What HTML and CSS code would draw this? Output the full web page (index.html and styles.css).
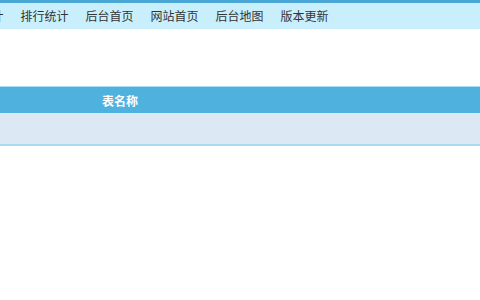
FILE: index.html
```html
<!DOCTYPE html>
<html lang="zh-CN">
<head>
    <meta charset="UTF-8">
    <title>后台管理</title>
    <link rel="stylesheet" href="styles.css">
</head>
<body>

    <div class="topbar">
        <ul class="nav">
            <li class="cut">数据统计</li>
            <li>排行统计</li>
            <li>后台首页</li>
            <li>网站首页</li>
            <li>后台地图</li>
            <li>版本更新</li>
        </ul>
    </div>

    <table class="list">
        <thead>
            <tr>
                <th class="name">表名称</th>
                <th></th>
            </tr>
        </thead>
        <tbody>
            <tr>
                <td></td>
                <td></td>
            </tr>
        </tbody>
    </table>

</body>
</html>
```

FILE: styles.css
```css
body {
    margin: 0;
    font-family: "Noto Sans CJK SC", "Liberation Sans", sans-serif;
    font-size: 12px;
    color: #333;
    background: #fff;
    overflow: hidden;
}
.topbar {
    border-top: 3px solid #4aa6d4;
    background: #c9effd;
    height: 26px;
}
.nav {
    list-style: none;
    margin: 0 0 0 -53px;
    padding: 0;
    display: flex;
    height: 26px;
    align-items: center;
    white-space: nowrap;
}
.nav li {
    width: 65px;
    text-align: center;
    line-height: 26px;
}
.list {
    margin-top: 57px;
    width: 100%;
    border-collapse: collapse;
    border-top: 1px solid #a9dbf2;
    border-bottom: 2px solid #a9dbf2;
}
.list th {
    height: 26px;
    padding: 0;
    background: #4fb1de;
    color: #fff;
    font-weight: bold;
    font-size: 12px;
}
.list th.name {
    width: 240px;
}
.list td {
    height: 31px;
    padding: 0;
    background: #dce9f5;
}
```
